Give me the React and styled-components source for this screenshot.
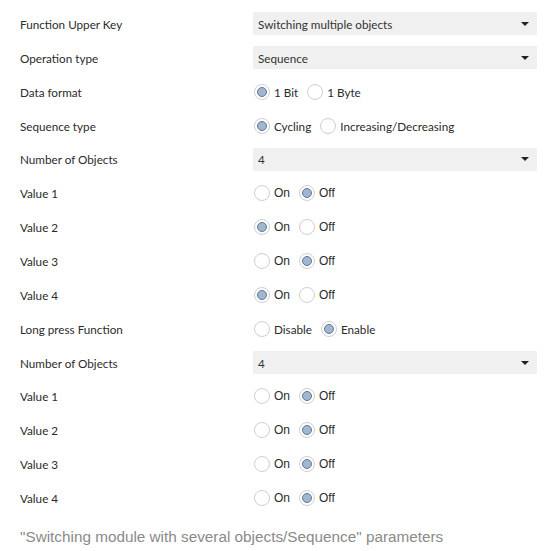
import React from "react";
import styled, { createGlobalStyle } from "styled-components";

const GlobalStyle = createGlobalStyle`
  html, body {
    margin: 0;
    padding: 0;
    background: #ffffff;
  }
`;

const rows = [
  { label: "Function Upper Key", select: "Switching multiple objects" },
  { label: "Operation type", select: "Sequence" },
  { label: "Data format", options: ["1 Bit", "1 Byte"], checked: 0, font: "lato" },
  { label: "Sequence type", options: ["Cycling", "Increasing/Decreasing"], checked: 0, font: "lato" },
  { label: "Number of Objects", select: "4" },
  { label: "Value 1", options: ["On", "Off"], checked: 1 },
  { label: "Value 2", options: ["On", "Off"], checked: 0 },
  { label: "Value 3", options: ["On", "Off"], checked: 1 },
  { label: "Value 4", options: ["On", "Off"], checked: 0 },
  { label: "Long press Function", options: ["Disable", "Enable"], checked: 1, font: "lato" },
  { label: "Number of Objects", select: "4" },
  { label: "Value 1", options: ["On", "Off"], checked: 1 },
  { label: "Value 2", options: ["On", "Off"], checked: 1 },
  { label: "Value 3", options: ["On", "Off"], checked: 1 },
  { label: "Value 4", options: ["On", "Off"], checked: 1 },
];

const App = () => {
  return (
    <>
      <GlobalStyle />
      <Page>
        <Form>
          {rows.map((row, i) => (
            <Row key={i}>
              <Label>{row.label}</Label>
              {row.select ? (
                <Select>
                  <span>{row.select}</span>
                  <Arrow />
                </Select>
              ) : (
                <Options>
                  {row.options.map((opt, j) => (
                    <Option key={opt}>
                      <Radio checked={row.checked === j} />
                      <OptionText font={row.font}>{opt}</OptionText>
                    </Option>
                  ))}
                </Options>
              )}
            </Row>
          ))}
        </Form>
        <Caption>"Switching module with several objects/Sequence" parameters</Caption>
      </Page>
    </>
  );
};

const Page = styled.div`
  width: 550px;
  padding: 7px 13px 0 20px;
  box-sizing: border-box;
`;

const Form = styled.div`
  display: flex;
  flex-direction: column;
`;

const Row = styled.div`
  display: grid;
  grid-template-columns: 233px 1fr;
  align-items: center;
  height: 33.86px;
`;

const Label = styled.div`
  font-family: Lato, "Open Sans", sans-serif;
  font-size: 11.7px;
  color: #2b2b2b;
`;

const Select = styled.div`
  display: flex;
  align-items: center;
  justify-content: space-between;
  height: 23px;
  background: #f0f0f0;
  padding: 0 8px 0 5px;
  font-family: Lato, "Open Sans", sans-serif;
  font-size: 11.7px;
  color: #333333;
`;

const Arrow = styled.span`
  width: 0;
  height: 0;
  border-left: 4px solid transparent;
  border-right: 4px solid transparent;
  border-top: 4px solid #222222;
`;

const Options = styled.div`
  display: flex;
  align-items: center;
  gap: 9px;
  padding-left: 1px;
`;

const Option = styled.label`
  display: flex;
  align-items: center;
  gap: 4px;
`;

const Radio = styled.span`
  box-sizing: border-box;
  width: 16px;
  height: 16px;
  border-radius: 50%;
  border: 1px solid #cfcfcf;
  background: #ffffff;
  display: flex;
  align-items: center;
  justify-content: center;

  &::after {
    content: "";
    display: ${(p) => (p.checked ? "block" : "none")};
    width: 10px;
    height: 10px;
    box-sizing: border-box;
    border-radius: 50%;
    background: #a3b6cf;
    border: 1px solid #5b7799;
  }
`;

const OptionText = styled.span`
  font-family: ${(p) =>
    p.font === "lato" ? 'Lato, "Open Sans", sans-serif' : '"Liberation Sans", Arial, sans-serif'};
  font-size: ${(p) => (p.font === "lato" ? "11.7px" : "12px")};
  color: #2b2b2b;
`;

const Caption = styled.div`
  margin-top: 13px;
  font-family: "Liberation Sans", Arial, sans-serif;
  font-size: 15.3px;
  color: #8a8a8a;
`;

export default App;
